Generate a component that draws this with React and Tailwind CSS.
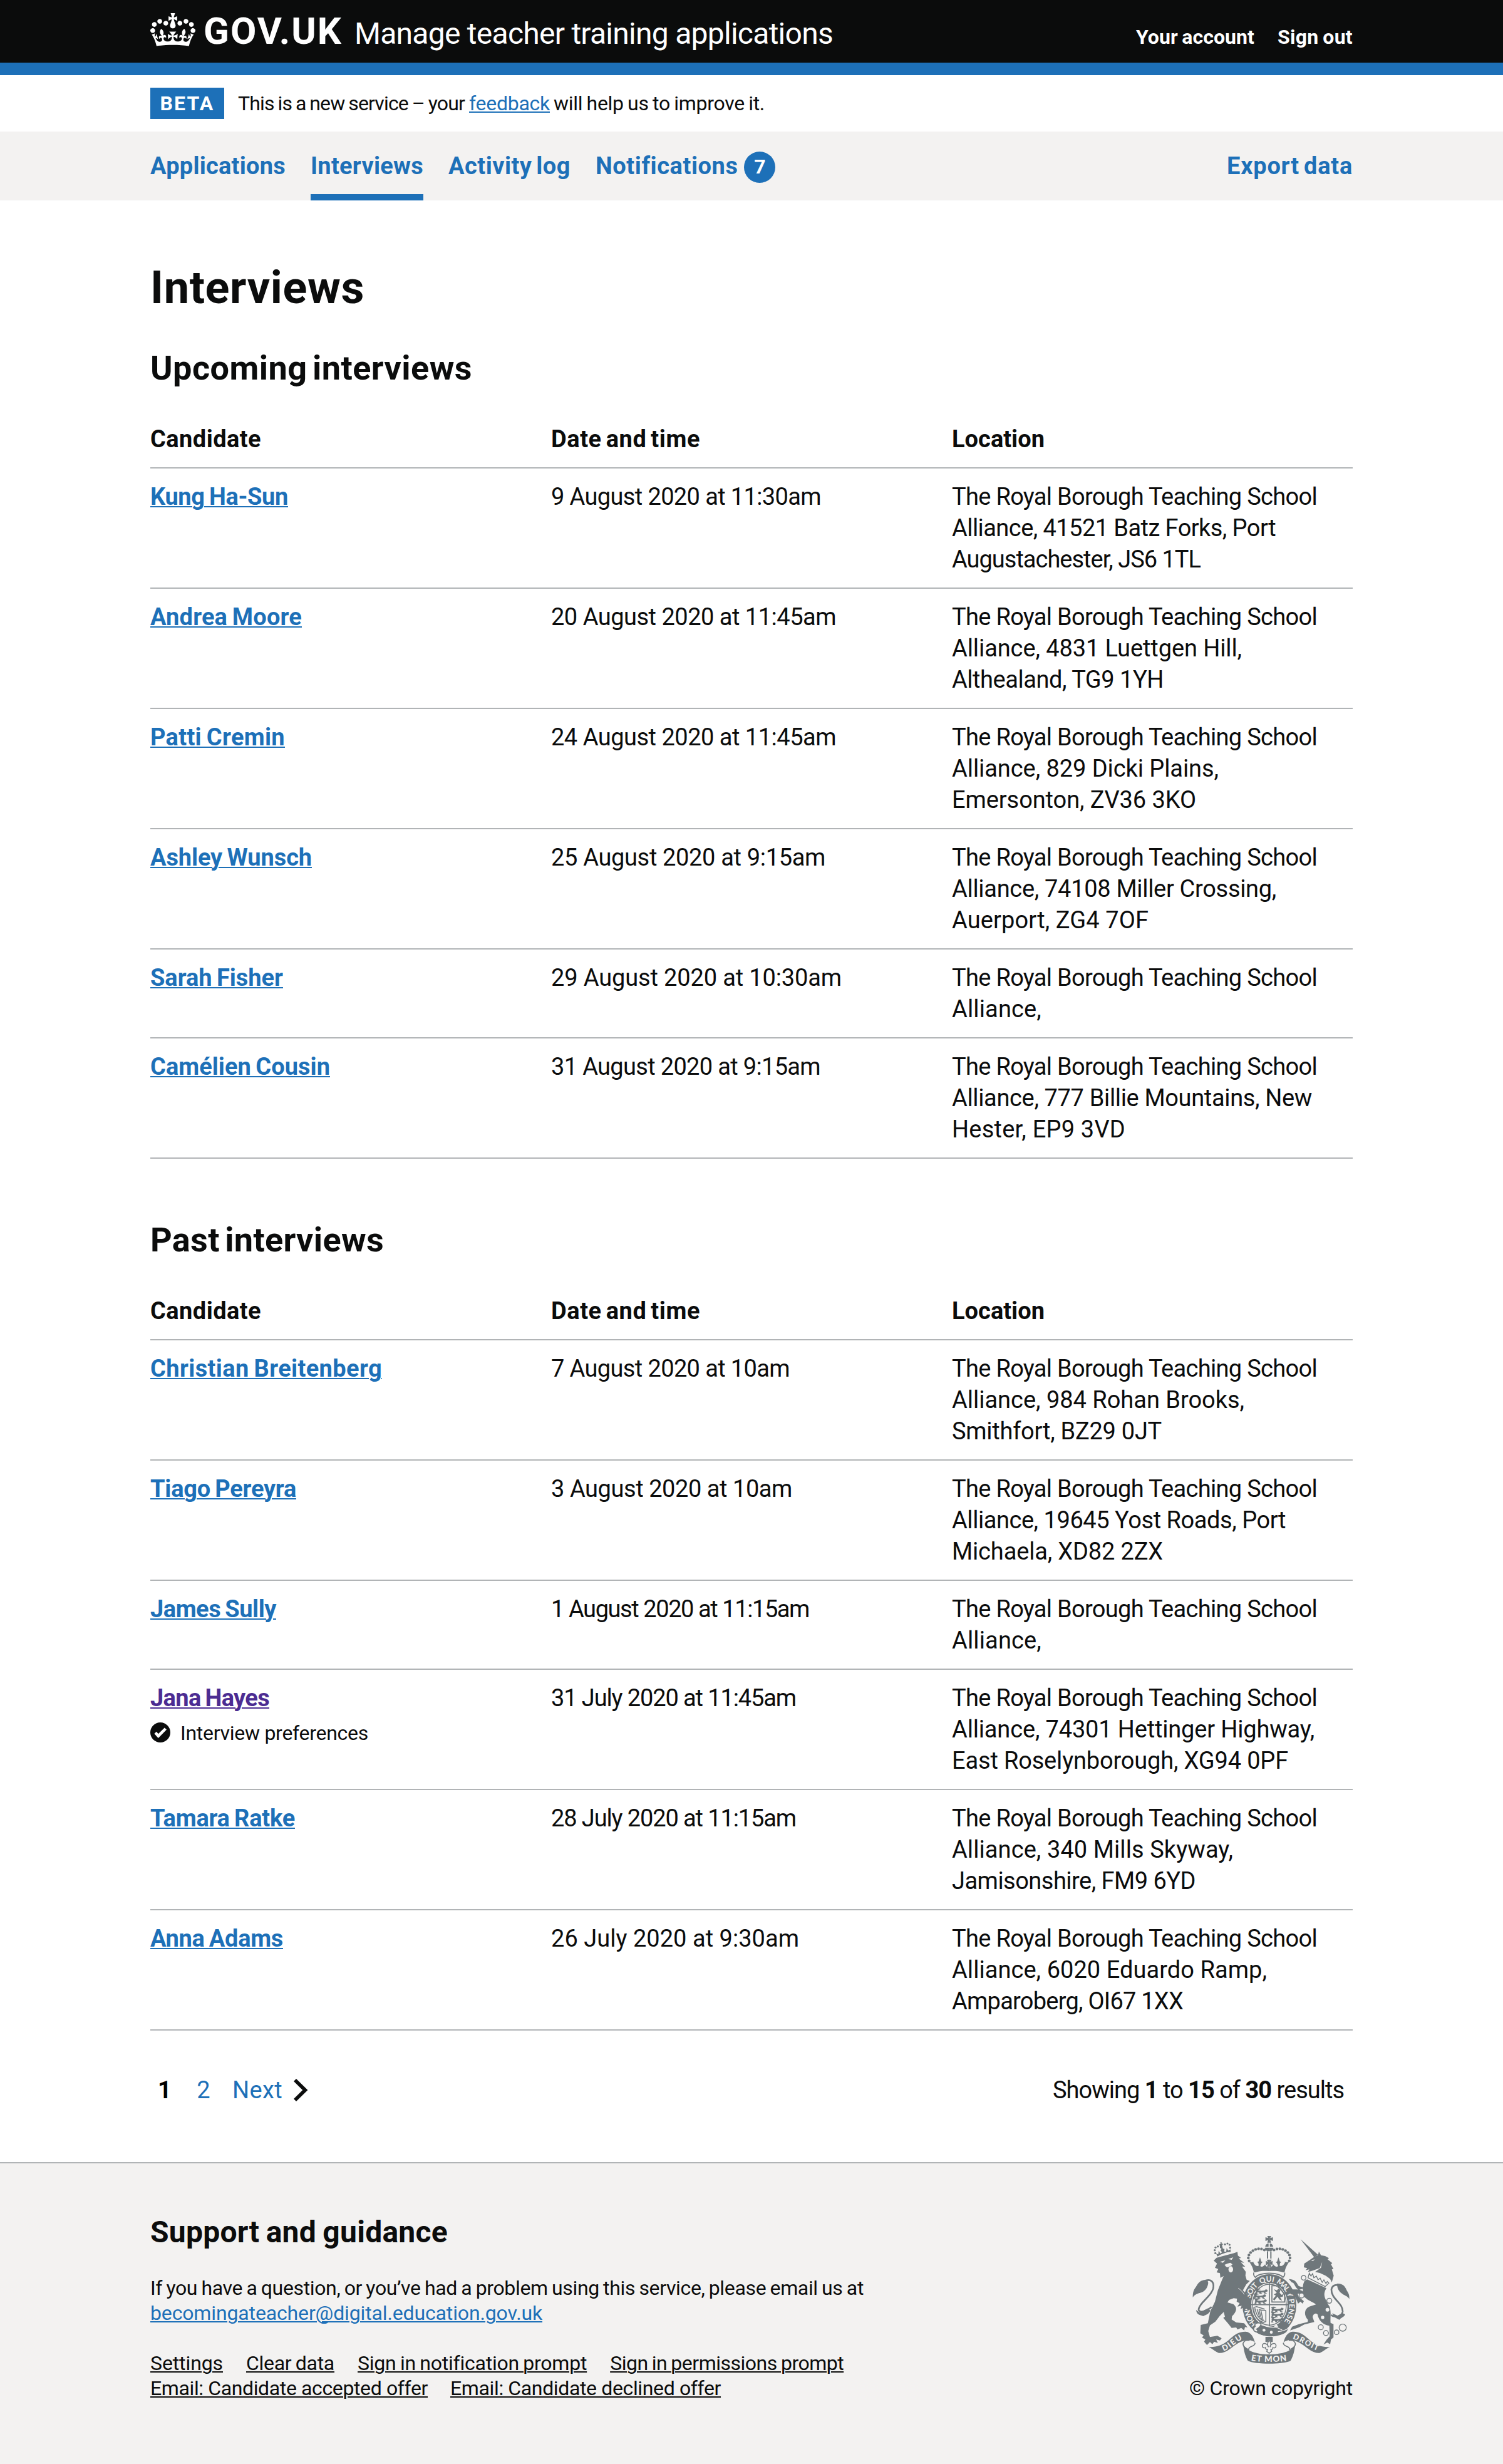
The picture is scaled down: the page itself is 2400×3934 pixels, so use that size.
import React, { useLayoutEffect, useRef, useState } from "react";

/* Sets text on a fixed measure by spreading the difference over its letters. */
function Fit({ w, as: Tag = "span", className = "", children, ...rest }) {
  const ref = useRef(null);
  const [spacing, setSpacing] = useState(0);
  useLayoutEffect(() => {
    const el = ref.current;
    const natural = el.getBoundingClientRect().width - spacing * el.textContent.length;
    setSpacing((w - natural) / el.textContent.length);
  }, [w]);
  return (
    <Tag
      ref={ref}
      className={"inline-block whitespace-nowrap " + className}
      style={{ letterSpacing: `${spacing}px` }}
      {...rest}
    >
      {children}
    </Tag>
  );
}

function Link({ className = "", ...props }) {
  return (
    <Fit
      as="a"
      href="#"
      className={"underline decoration-[2px] underline-offset-[2px] " + className}
      {...props}
    />
  );
}

const SCHOOL = ["The Royal Borough Teaching School", 583];

const upcoming = [
  { name: ["Kung Ha-Sun", 220], date: ["9 August 2020 at 11:30am", 431], place: [["Alliance, 41521 Batz Forks, Port", 517], ["Augustachester, JS6 1TL", 397]] },
  { name: ["Andrea Moore", 242], date: ["20 August 2020 at 11:45am", 455], place: [["Alliance, 4831 Luettgen Hill,", 463], ["Althealand, TG9 1YH", 338]] },
  { name: ["Patti Cremin", 215], date: ["24 August 2020 at 11:45am", 455], place: [["Alliance, 829 Dicki Plains,", 426], ["Emersonton, ZV36 3KO", 390]] },
  { name: ["Ashley Wunsch", 258], date: ["25 August 2020 at 9:15am", 438], place: [["Alliance, 74108 Miller Crossing,", 518], ["Auerport, ZG4 7OF", 314]] },
  { name: ["Sarah Fisher", 212], date: ["29 August 2020 at 10:30am", 464], place: [["Alliance,", 143]] },
  { name: ["Camélien Cousin", 287], date: ["31 August 2020 at 9:15am", 430], place: [["Alliance, 777 Billie Mountains, New", 575], ["Hester, EP9 3VD", 277]] },
];

const past = [
  { name: ["Christian Breitenberg", 370], date: ["7 August 2020 at 10am", 381], place: [["Alliance, 984 Rohan Brooks,", 467], ["Smithfort, BZ29 0JT", 335]] },
  { name: ["Tiago Pereyra", 233], date: ["3 August 2020 at 10am", 385], place: [["Alliance, 19645 Yost Roads, Port", 533], ["Michaela, XD82 2ZX", 337]] },
  { name: ["James Sully", 201], date: ["1 August 2020 at 11:15am", 412], place: [["Alliance,", 143]] },
  { name: ["Jana Hayes", 190], visited: true, note: "Interview preferences", date: ["31 July 2020 at 11:45am", 391], place: [["Alliance, 74301 Hettinger Highway,", 579], ["East Roselynborough, XG94 0PF", 537]] },
  { name: ["Tamara Ratke", 231], date: ["28 July 2020 at 11:15am", 391], place: [["Alliance, 340 Mills Skyway,", 449], ["Jamisonshire, FM9 6YD", 389]] },
  { name: ["Anna Adams", 212], date: ["26 July 2020 at 9:30am", 396], place: [["Alliance, 6020 Eduardo Ramp,", 503], ["Amparoberg, OI67 1XX", 369]] },
];

function TickIcon() {
  return (
    <svg className="mt-[3px] h-8 w-8 shrink-0" viewBox="0 0 32 32">
      <circle cx="16" cy="16" r="16" fill="#0b0c0c" />
      <path d="M6.4 18 9.8 14.8 12.8 18.2 22.8 8.4 26 11.4 12.7 25Z" fill="#fff" />
    </svg>
  );
}

function InterviewTable({ rows }) {
  return (
    <div>
      <div className="grid h-[92px] grid-cols-3 border-b-2 border-[#b1b4b6] pt-5 font-bold [word-spacing:-0.08em]">
        <div><Fit w={177}>Candidate</Fit></div>
        <div><Fit w={238}>Date and time</Fit></div>
        <div><Fit w={148}>Location</Fit></div>
      </div>
      {rows.map((r) => (
        <div key={r.name[0]} className="grid grid-cols-3 border-b-2 border-[#b1b4b6] py-5">
          <div className="h-[50px]">
            <Link w={r.name[1]} className={r.visited ? "font-bold text-[#4c2c92] [word-spacing:-0.05em]" : "font-bold text-[#1d70b8] [word-spacing:-0.05em]"}>{r.name[0]}</Link>
            {r.note && (
              <div className="mt-[11px] flex gap-4 text-[32px] leading-10">
                <TickIcon />
                <Fit w={300}>{r.note}</Fit>
              </div>
            )}
          </div>
          <div><Fit w={r.date[1]}>{r.date[0]}</Fit></div>
          <div className="flex flex-col items-start">
            {[SCHOOL, ...r.place].map(([text, w]) => <Fit key={text} w={w}>{text}</Fit>)}
          </div>
        </div>
      ))}
    </div>
  );
}

function CrownLogo() {
  return (
    <svg className="mt-[21px] h-[53px] w-[72px]" viewBox="0 0 132 97" fill="currentColor" fillRule="evenodd">
      <path d="M25 30.2c3.5 1.5 7.7-.2 9.1-3.7 1.5-3.6-.2-7.8-3.9-9.2-3.6-1.4-7.6.3-9.1 3.9-1.4 3.5.3 7.5 3.9 9zM9 39.5c3.6 1.5 7.8-.2 9.2-3.7 1.5-3.6-.2-7.8-3.9-9.1-3.6-1.5-7.6.2-9.1 3.8-1.4 3.5.3 7.5 3.8 9zM4.4 57.2c3.5 1.5 7.7-.2 9.1-3.8 1.5-3.6-.2-7.7-3.9-9.1-3.5-1.5-7.6.3-9.1 3.8-1.4 3.5.3 7.6 3.9 9.1zm38.3-21.4c3.5 1.5 7.7-.2 9.1-3.8 1.5-3.6-.2-7.7-3.9-9.1-3.6-1.5-7.6.3-9.1 3.8-1.3 3.6.4 7.7 3.9 9.1zm64.4-5.6c-3.6 1.5-7.8-.2-9.1-3.7-1.5-3.6.2-7.8 3.8-9.2 3.6-1.4 7.7.3 9.2 3.9 1.3 3.5-.4 7.5-3.9 9zm15.9 9.3c-3.6 1.5-7.7-.2-9.1-3.7-1.5-3.6.2-7.8 3.7-9.1 3.6-1.5 7.7.2 9.2 3.8 1.5 3.5-.3 7.5-3.8 9zm4.7 17.7c-3.6 1.5-7.8-.2-9.2-3.8-1.5-3.6.2-7.7 3.9-9.1 3.6-1.5 7.7.3 9.2 3.8 1.3 3.5-.4 7.6-3.9 9.1zM89.3 35.8c-3.6 1.5-7.8-.2-9.2-3.8-1.4-3.6.2-7.7 3.9-9.1 3.6-1.5 7.7.3 9.2 3.8 1.4 3.6-.3 7.7-3.9 9.1zM69.7 17.7l8.9 4.7V9.3l-8.9 2.8c-.2-.3-.5-.6-.9-.9L72.4 0H59.6l3.5 11.2c-.3.3-.6.5-.9.9l-8.8-2.8v13.1l8.8-4.7c.3.3.6.7.9.9l-5 15.4v.1c-.2.8-.4 1.6-.4 2.4 0 4.1 3.1 7.5 7 8.1h.2c.3 0 .7.1 1 .1.4 0 .7 0 1-.1h.2c4-.6 7.1-4.1 7.1-8.1 0-.8-.1-1.7-.4-2.4V34l-5.1-15.4c.4-.2.7-.6 1-.9zM66 92.8c16.9 0 32.8 1.1 47.1 3.2 4-16.9 8.9-26.7 14-33.5l-9.6-3.4c1 4.9 1.1 7.2 0 10.2-1.5-1.4-3-4.3-4.2-8.7L108.6 76c2.8-2 5-3.2 7.5-3.3-4.4 9.4-10 11.9-13.6 11.2-4.3-.8-6.3-4.6-5.6-7.9 1-4.7 5.7-5.9 8-.5 4.3-8.7-3-11.4-7.6-8.8 7.1-7.2 7.9-13.5 2.1-21.1-8 6.1-8.1 12.3-4.5 20.8-4.7-5.4-12.1-2.5-9.5 6.2 3.4-5.2 7.9-2 7.2 3.1-.6 4.3-6.4 7.8-13.5 7.2-10.3-.9-10.9-8-11.2-13.8 2.5-.5 7.1 1.8 11 7.3L80.2 60c-4.1 4.4-8 5.3-12.3 5.4 1.4-4.4 8-11.6 8-11.6H55.5s6.4 7.2 7.9 11.6c-4.2-.1-8-1-12.3-5.4l1.4 16.4c3.9-5.5 8.5-7.7 10.9-7.3-.3 5.8-.9 12.8-11.1 13.8-7.2.6-12.9-2.9-13.5-7.2-.7-5 3.8-8.3 7.1-3.1 2.7-8.7-4.6-11.6-9.4-6.2 3.7-8.5 3.6-14.7-4.6-20.8-5.8 7.6-5 13.9 2.2 21.1-4.7-2.6-11.9.1-7.7 8.8 2.3-5.5 7.1-4.2 8.1.5.7 3.3-1.3 7.1-5.7 7.9-3.5.7-9-1.8-13.5-11.2 2.5.1 4.7 1.3 7.5 3.3l-4.7-15.4c-1.2 4.4-2.7 7.2-4.3 8.7-1.1-3-.9-5.3 0-10.2l-9.5 3.4c5 6.9 9.9 16.7 14 33.5 14.8-2.1 30.8-3.2 47.7-3.2z" />
    </svg>
  );
}

const INK = "#6f777b";
const PAPER = "#f3f2f1";

/* Half of the large crown; drawn twice, mirrored about x = 498. */
function HalfCrown() {
  const beads = [[475, 157], [461, 152], [447, 151], [433, 154], [420, 160], [409, 169], [401, 181], [398, 195], [402, 209]];
  return (
    <g fill={INK}>
      {beads.map(([x, y]) => <circle key={x} cx={x} cy={y} r="6.6" />)}
      <path d="M498 265V240C489 240 482 236 478 226C470 238 462 240 455 234L461 220L467 214L460 212L454 192L447 212L440 214L446 220L448 232C438 238 428 230 422 216L428 214L404 216C412 228 420 240 424 262L430 264C455 256 478 256 498 258Z" />
      <path d="M424 265C422 276 424 282 432 288C440 276 470 268 498 268" fill="none" stroke={INK} strokeWidth="5" />
      <path d="M490 163V198" stroke={INK} strokeWidth="6" />
      <path d="M498 90H489L493 100L480 96V114L493 109L489 122H498ZM495 125V141H479C480 132 486 126 495 125ZM478 146H498V163C486 163 478 158 478 146ZM498 203H486L492 214L482 209V230L492 224L487 238H498Z" />
    </g>
  );
}

/* Passant lion used in two quarters of the shield. */
function Passant({ x, y }) {
  return (
    <path
      transform={`translate(${x} ${y})`}
      d="M2 6L10 2L16 6L30 7L44 5L50 0L58 3L56 10L48 11L47 17L54 19L44 20L40 13L30 13L26 18L32 20L20 20L18 13L10 13L6 18L10 21L0 21L3 12Z M4 4L0 -3L12 -5L24 -1"
      fill={INK}
      stroke={INK}
      strokeWidth="1.5"
    />
  );
}

/* Motto words with their start and length along the garter. */
const motto = [["HONI", 0, 86], ["SOIT", 130, 74], ["QUI", 217, 66], ["MAL", 294, 66], ["Y", 366, 20], ["PENSE", 396, 112]];

function CoatOfArms() {
  return (
    <svg className="h-[204px] w-[251px]" viewBox="130 90 753 612">
      <HalfCrown />
      <g transform="matrix(-1 0 0 1 996 0)"><HalfCrown /></g>

      {/* garter */}
      <ellipse cx="499" cy="421" rx="129" ry="148" fill={INK} />
      <ellipse cx="499" cy="419" rx="89" ry="106" fill={PAPER} stroke={INK} strokeWidth="4" />
      <ellipse cx="499" cy="419" rx="81" ry="98" fill="none" stroke={INK} strokeWidth="4" />
      <path d="M499 316V522M412 419H586" stroke={INK} strokeWidth="5" />
      <defs>
        <path id="garter" d="M439 511A95 114 0 1 1 559 511" />
        <path id="dieu" d="M279 641C315 632 335 596 380 580" />
        <path id="mon" d="M408 685C450 696 550 696 592 685" />
        <path id="droit" d="M610 582C650 592 686 626 738 642" />
      </defs>
      {motto.map(([word, start, length]) => (
        <text key={word} fill={PAPER} className="font-['Lato'] text-[36px] font-bold">
          <textPath href="#garter" startOffset={start} textLength={length} lengthAdjust="spacing">{word}</textPath>
        </text>
      ))}

      {/* shield quarters */}
      <Passant x={432} y={346} />
      <Passant x={424} y={370} />
      <Passant x={428} y={394} />
      <Passant x={508} y={434} />
      <Passant x={508} y={458} />
      <Passant x={508} y={482} />
      <path d="M511 328H540L572 368V406H511Z" fill="none" stroke={INK} strokeWidth="5" />
      <path d="M520 345L535 350L542 342L552 348L548 362L558 372L568 366L562 382L550 382L560 400L546 394L538 380L522 400L516 392L530 376L520 370L534 362Z" fill={INK} />
      <path d="M424 432L438 428L476 440M430 436C436 470 452 490 476 498M424 432C424 462 436 492 470 504L482 500V448C476 440 462 452 450 440M440 440L452 478M449 443L461 488M458 446L469 494" fill="none" stroke={INK} strokeWidth="4.5" />

      {/* buckle and belt end */}
      <path d="M432 512C460 548 530 562 592 530L580 550C550 574 480 582 430 548Z" fill={INK} />
      <path d="M454 512C480 524 510 528 530 526L560 540" fill="none" stroke={PAPER} strokeWidth="4" />
      <path d="M540 548C560 546 580 540 598 528" fill="none" stroke={PAPER} strokeWidth="4" />
      <circle cx="473" cy="541" r="7" fill={PAPER} />
      <circle cx="508" cy="551" r="7" fill={PAPER} />
      <path d="M459 508C436 502 424 512 431 522C420 530 420 546 436 549C444 552 446 540 438 536C446 530 460 524 459 508Z" fill={PAPER} stroke={INK} strokeWidth="5" />
      <path d="M520 526L532 512L542 524Z" fill={PAPER} />

      {/* pendant */}
      <path d="M480 573H515V598H506L498 584L490 598H480Z" fill={INK} />
      <path d="M498 588C488 602 488 612 494 622C492 606 466 596 465 616C466 626 474 628 480 624C480 630 484 634 490 634L486 642L498 652L510 642L506 634C512 634 516 630 516 624C522 628 530 626 531 616C530 596 504 606 502 622C508 612 508 602 498 588Z" fill="none" stroke={INK} strokeWidth="4.5" />

      {/* ribbon */}
      <path d="M207 621C240 624 272 614 302 590C332 562 350 548 385 548C412 550 424 576 430 602C424 592 404 586 385 590C356 594 330 616 308 632C290 646 270 652 256 650C240 644 226 630 207 621Z" fill={INK} />
      <path d="M789 621C756 624 724 614 694 590C664 562 646 548 611 548C584 550 572 576 566 602C572 592 592 586 611 590C640 594 666 616 688 632C706 646 726 652 740 650C756 644 770 630 789 621Z" fill={INK} />
      <path d="M430 602C432 622 396 616 400 634C384 628 370 616 373 604C376 594 388 588 404 590M566 602C564 622 600 616 596 634C612 628 626 616 623 604C620 594 608 588 592 590" fill="none" stroke={INK} strokeWidth="5" />
      <path d="M373 606C376 640 384 668 396 688C430 706 566 706 600 688C612 668 620 640 623 606C616 640 560 657 498 657C436 657 384 640 373 606Z" fill={INK} />
      <text fill={PAPER} className="font-['Lato'] text-[38px] font-black"><textPath href="#dieu" textLength="108">DIEU</textPath></text>
      <text fill={PAPER} className="font-['Lato'] text-[40px] font-black"><textPath href="#mon" startOffset="3" textLength="172">ET MON</textPath></text>
      <text fill={PAPER} className="font-['Lato'] text-[36px] font-black"><textPath href="#droit" textLength="132">DROIT</textPath></text>

      {/* lion */}
      <path d="M232 208L246 194L262 190L330 172L346 166L348 184L363 195L352 198L378 218L362 216L383 237L368 236L386 262L384 280L390 300L405 305L388 322L372 350L392 370L404 404L410 440L396 446L388 436L380 448L372 434L360 440L366 424L346 428L356 412L342 404L344 390L328 388L306 396L298 408L326 416C346 432 344 450 320 474L318 490L340 504L378 508L394 528L382 526L378 542L364 530L346 538L340 528L318 530L300 508L278 482L286 476L280 454L262 472L240 500L214 518L206 545L214 574L250 568L270 580L262 590L244 586L252 602L234 596L226 608L214 598L200 612L186 596L192 586L176 576L184 566L168 556L170 516L204 508L216 450L238 405L252 350L272 300L280 282L264 290L262 268L246 264L254 248L238 242L248 222Z" fill={INK} />
      <path d="M262 214L288 206L276 218ZM302 200L326 192L318 204ZM284 228L298 222L312 218L322 226L316 232L300 240L292 238Z" fill={PAPER} />
      <ellipse cx="314" cy="250" rx="11" ry="15" fill={PAPER} />
      <path d="M350 340C366 352 374 362 378 370" fill="none" stroke={PAPER} strokeWidth="3" />
      <path d="M222 430C196 452 160 462 160 440C166 406 222 380 230 340C236 306 216 296 192 304" fill="none" stroke={INK} strokeWidth="8" />
      <path d="M202 300C176 300 164 304 148 332C136 348 132 358 132 384C142 368 156 366 174 360C194 352 204 334 206 314ZM148 444C150 470 170 468 182 474C190 468 204 470 216 448L206 436L164 456Z" fill={INK} />
      {[[240, 172], [237, 158], [241, 145], [252, 140], [286, 130], [298, 126], [308, 132], [311, 146]].map(([x, y]) => <circle key={x} cx={x} cy={y} r="4.8" fill={INK} />)}
      <path d="M250 188L244 174L254 178L256 160L264 174L272 168L264 158L270 152L262 146L262 136L258 132L266 126L264 120L270 120L270 126L278 128L272 134L276 150L284 152L282 164L292 166L294 148L302 160L312 154L314 166C290 168 270 176 250 188Z" fill={INK} />

      {/* unicorn */}
      <path d="M648 105L732 180L714 192Z" fill={INK} />
      <path d="M714 190L732 182L736 164L746 182L766 186L784 196L778 202L800 220L794 226L806 248L798 250L807 280L798 312L790 296L780 288L768 280L742 268L718 262L746 242L752 214L740 244L700 258L684 262L690 250L672 254L680 244L664 240L666 222L690 206Z" fill={INK} />
      <path d="M698 206L716 202L708 210Z" fill={PAPER} />
      <path d="M690 268L684 290L766 332L784 316L776 308L770 318L760 300L752 312L742 292L732 300L724 282L712 290L706 270L698 282Z" fill={PAPER} stroke={INK} strokeWidth="4" />
      <path d="M668 304L680 298L772 340C752 372 766 392 788 430C796 460 790 480 792 506L806 512L806 576L794 586L790 608L776 600L758 610L772 588L788 570L786 520C756 516 734 494 730 466C722 456 708 462 706 478L714 502L666 514L640 528L598 542L608 524L640 512L682 502L684 492C664 470 664 440 690 428L722 418C702 400 672 400 664 370C656 346 658 322 668 304Z" fill={INK} />
      <path d="M668 340C650 330 640 336 634 322C626 304 616 298 592 296L606 312C622 314 618 336 640 348ZM672 366C648 340 628 346 606 346L588 366L610 366C620 380 630 392 636 414L648 404L658 414L664 402L640 382L634 366C650 366 660 374 672 388Z" fill={INK} />
      <path d="M794 468C812 484 846 476 850 452C852 410 794 392 796 346C800 322 826 320 846 330" fill="none" stroke={INK} strokeWidth="8" />
      <path d="M822 318C852 316 862 332 870 352C880 366 882 374 882 392C872 376 858 376 844 364C828 352 824 336 822 318ZM800 460C808 484 824 484 834 492C842 480 856 480 862 466L848 458L826 472Z" fill={INK} />
      <g fill={PAPER} stroke={INK} strokeWidth="4">
        <circle cx="663" cy="290" r="11" /><circle cx="653" cy="375" r="12" /><circle cx="786" cy="400" r="12" />
        <circle cx="745" cy="527" r="12" /><circle cx="770" cy="555" r="12" /><circle cx="821" cy="551" r="11" /><circle cx="850" cy="529" r="17" />
      </g>
      <circle cx="649" cy="318" r="7" fill={PAPER} />
      <circle cx="777" cy="443" r="9" fill={PAPER} />
      <circle cx="754" cy="480" r="8" fill={PAPER} />
    </svg>
  );
}

export default function App() {
  return (
    <div className="h-[3934px] w-[2400px] overflow-hidden bg-white font-['Roboto',sans-serif] text-[38px] leading-[50px] text-[#0b0c0c]">
      <header className="h-[120px] border-b-[20px] border-[#1d70b8] bg-[#0b0c0c] text-white">
        <div className="mx-auto flex w-[1920px] items-start">
          <CrownLogo />
          <Fit w={222} className="mt-5 ml-[13px] text-[60px] leading-[60px] font-bold">GOV.UK</Fit>
          <Fit w={764} className="mt-6 ml-[19px] text-[48px] leading-[60px]">Manage teacher training applications</Fit>
          <nav className="mt-[39px] ml-auto flex gap-[37px] text-[32px] leading-10 font-bold [word-spacing:-0.05em]">
            <Fit as="a" href="#" w={189}>Your account</Fit>
            <Fit as="a" href="#" w={120}>Sign out</Fit>
          </nav>
        </div>
      </header>

      <div className="mx-auto flex h-[90px] w-[1920px] items-center text-[32px] [word-spacing:-0.04em]">
        <strong className="flex h-[50px] w-[118px] justify-center bg-[#1d70b8] font-bold text-white"><Fit w={87}>BETA</Fit></strong>
        <Fit w={362} className="ml-[22px]">This is a new service – your</Fit>
        <Link w={129} className="ml-[7px] text-[#1d70b8]">feedback</Link>
        <Fit w={337} className="ml-[6px]">will help us to improve it.</Fit>
      </div>

      <div className="h-[110px] bg-[#f3f2f1]">
        <nav className="mx-auto flex h-full w-[1920px] gap-10 font-bold text-[#1d70b8] [word-spacing:-0.08em]">
          <Fit as="a" href="#" w={216} className="pt-[30px]">Applications</Fit>
          <Fit as="a" href="#" w={180} className="border-b-[10px] border-[#1d70b8] pt-[30px]">Interviews</Fit>
          <Fit as="a" href="#" w={195} className="pt-[30px]">Activity log</Fit>
          <a href="#" className="flex gap-[10px] pt-[30px]">
            <Fit w={227}>Notifications</Fit>
            <span className="mt-[2px] h-[50px] w-[50px] rounded-full bg-[#1d70b8] text-center text-[32px] leading-[48px] text-white">7</span>
          </a>
          <Fit as="a" href="#" w={201} className="ml-auto pt-[30px]">Export data</Fit>
        </nav>
      </div>

      <main className="mx-auto w-[1920px] pt-[100px]">
        <h1 className="mb-[58px] h-20 text-[72px] leading-[80px] font-bold"><Fit w={342}>Interviews</Fit></h1>
        <h2 className="mb-[38px] h-[60px] text-[54px] leading-[60px] font-bold [word-spacing:-0.1em]"><Fit w={514}>Upcoming interviews</Fit></h2>
        <InterviewTable rows={upcoming} />
        <h2 className="mt-[100px] mb-[38px] h-[60px] text-[54px] leading-[60px] font-bold [word-spacing:-0.1em]"><Fit w={373}>Past interviews</Fit></h2>
        <InterviewTable rows={past} />
        <div className="flex h-[210px] pt-[70px]">
          <span className="ml-[12px] w-[22px] text-center font-bold text-black">1</span>
          <a href="#" className="ml-10 w-[22px] text-center text-[#1d70b8]">2</a>
          <Fit as="a" href="#" w={80} className="ml-[35px] text-[#1d70b8]">Next</Fit>
          <svg className="mt-[7px] ml-[18px] h-9 w-[23px]" viewBox="0 0 23 36"><path d="M4 0 22.4 18 4 36 0 32 14.2 18 0 4Z" fill="#0b0c0c" /></svg>
          <Fit w={465} className="mr-[14px] ml-auto">Showing <b>1</b> to <b>15</b> of <b>30</b> results</Fit>
        </div>
      </main>

      <footer className="h-[482px] border-t-2 border-[#b1b4b6] bg-[#f3f2f1] pt-20 text-[32px] leading-10">
        <div className="mx-auto flex w-[1920px] justify-between">
          <div>
            <h2 className="mb-[39px] h-[60px] text-[48px] leading-[60px] font-bold [word-spacing:-0.04em]"><Fit w={475}>Support and guidance</Fit></h2>
            <p className="mb-10 flex flex-col items-start">
              <Fit w={1139} className="[word-spacing:-0.04em]">If you have a question, or you’ve had a problem using this service, please email us at</Fit>
              <Link w={626} className="text-[#1d70b8]">becomingateacher@digital.education.gov.uk</Link>
            </p>
            <div className="flex gap-[37px] [word-spacing:-0.04em]">
              <Link w={116}>Settings</Link>
              <Link w={141}>Clear data</Link>
              <Link w={365}>Sign in notification prompt</Link>
              <Link w={373}>Sign in permissions prompt</Link>
            </div>
            <div className="flex gap-9">
              <Link w={443}>Email: Candidate accepted offer</Link>
              <Link w={432}>Email: Candidate declined offer</Link>
            </div>
          </div>
          <div className="flex flex-col items-center pt-9">
            <CoatOfArms />
            <Fit w={261} className="mt-[19px]">© Crown copyright</Fit>
          </div>
        </div>
      </footer>
    </div>
  );
}
